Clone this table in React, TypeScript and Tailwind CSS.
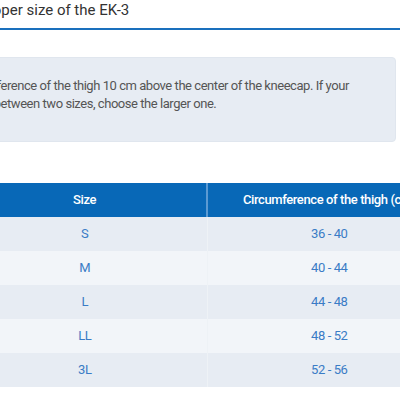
import React from 'react';

const rows = [
  { size: 'S', range: '36 - 40' },
  { size: 'M', range: '40 - 44' },
  { size: 'L', range: '44 - 48' },
  { size: 'LL', range: '48 - 52' },
  { size: '3L', range: '52 - 56' },
];

const App: React.FC = () => {
  return (
    <div className="w-[400px] h-[400px] overflow-hidden bg-white font-['Roboto',sans-serif]">
      <div className="h-[30px] border-b-[2px] border-[#1a70bd]">
        <h2 className="-ml-[100px] whitespace-nowrap text-[15px] leading-[20px] text-[#333]">
          Choose the proper size of the EK-3
        </h2>
      </div>

      <div className="mt-[27px] mr-[4px] -ml-[40px] rounded-[4px] bg-[#e7ecf3] pt-[19px] pb-[28px] border border-[#e0e6ee]">
        <p className="-ml-[71px] text-[13px] leading-[18px] tracking-[-0.45px] text-[#555] whitespace-nowrap">
          <span className="block">Measure the circumference of the thigh 10 cm above the center of the kneecap. If your</span>
          <span className="block ml-[14px]">measurement is between two sizes, choose the larger one.</span>
        </p>
      </div>

      <table className="mt-[41px] -ml-[37px] w-[488px] border-collapse text-[13px] tracking-[-0.4px]">
        <thead>
          <tr className="bg-[#0868b7] text-white h-[34px]">
            <th className="w-[244px] font-medium border-r-[2px] border-[#5b9ad3]">Size</th>
            <th className="w-[244px] font-medium">Circumference of the thigh (cm)</th>
          </tr>
        </thead>
        <tbody>
          {rows.map((r, i) => (
            <tr key={r.size} className={`h-[34px] text-[#3a7cc6] ${i % 2 === 0 ? 'bg-[#e7ecf3]' : 'bg-[#f2f5f9]'}`}>
              <td className="text-center border-r border-[#eef2f6]">{r.size}</td>
              <td className="text-center">{r.range}</td>
            </tr>
          ))}
        </tbody>
      </table>
    </div>
  );
};

export default App;
